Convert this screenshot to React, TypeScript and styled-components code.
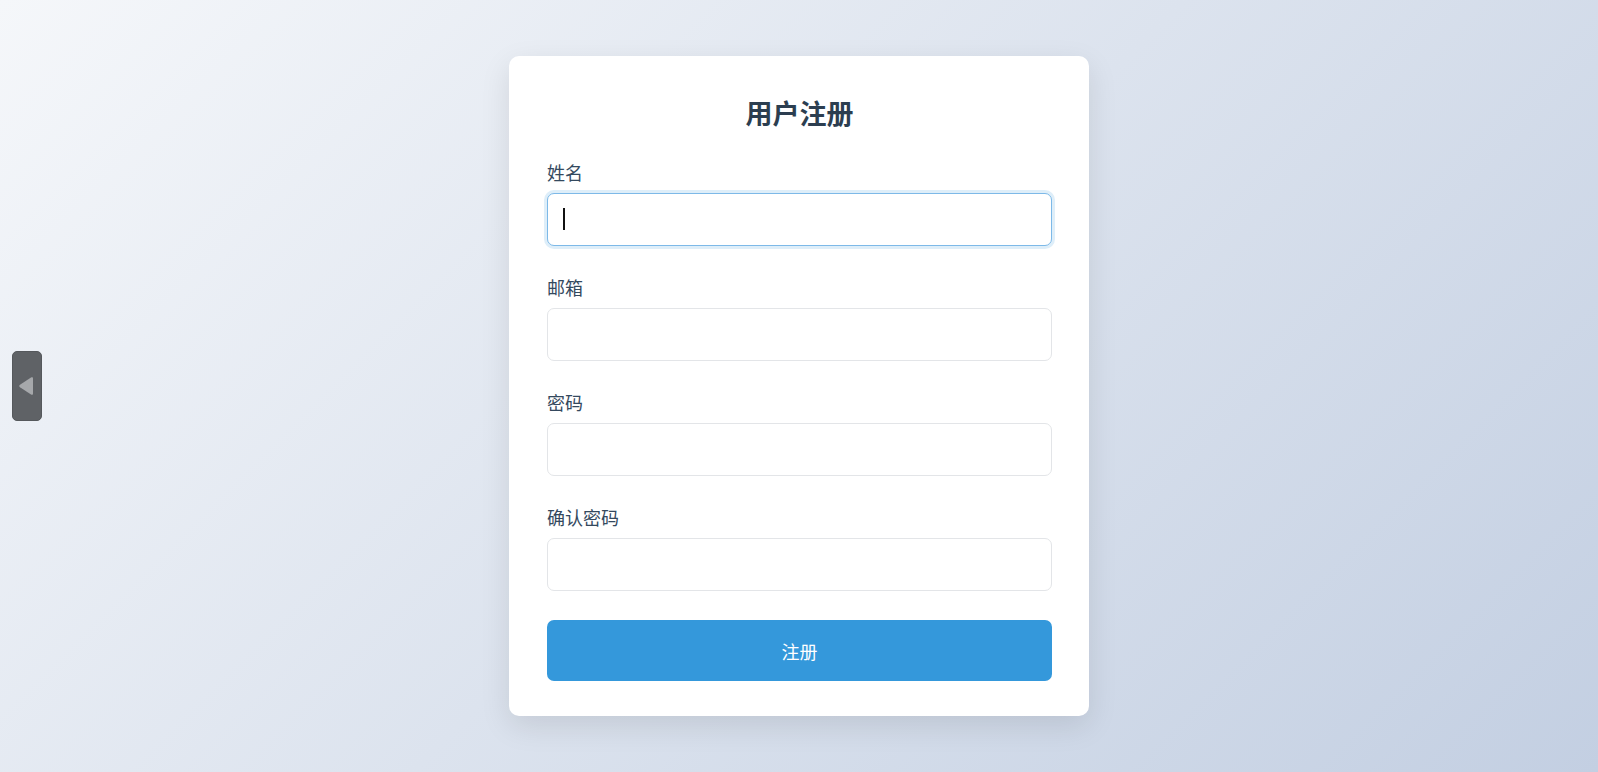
import { createGlobalStyle, styled } from 'styled-components'

const GlobalStyle = createGlobalStyle`
  html,
  body {
    margin: 0;
    padding: 0;
  }

  body {
    min-height: 100vh;
    font-family: 'Noto Sans CJK SC', 'Noto Sans', sans-serif;
    background: linear-gradient(135deg, #f5f7fa 0%, #c3cfe2 100%);
  }

  * {
    box-sizing: border-box;
  }
`

const fields = [
  { id: 'name', label: '姓名', type: 'text', focused: true },
  { id: 'email', label: '邮箱', type: 'email', focused: false },
  { id: 'password', label: '密码', type: 'password', focused: false },
  { id: 'confirm', label: '确认密码', type: 'password', focused: false },
]

export default function App() {
  return (
    <>
      <GlobalStyle />
      <Page>
        <SideTab type="button" aria-label="展开侧栏">
          <svg width="16" height="20" viewBox="0 0 16 20">
            <path
              d="M13 1.6 C14.2 0.9 15 1.4 15 2.6 L15 17.4 C15 18.6 14.2 19.1 13 18.4 L2 11.3 C1 10.6 1 9.4 2 8.7 Z"
              fill="#a6a8ab"
            />
          </svg>
        </SideTab>
        <Card>
          <Title>用户注册</Title>
          <Form onSubmit={(event) => event.preventDefault()}>
            {fields.map((field) => (
              <Group key={field.id}>
                <Label htmlFor={field.id}>{field.label}</Label>
                <InputWrap>
                  <Input id={field.id} type={field.type} $focused={field.focused} />
                  {field.focused && <Caret />}
                </InputWrap>
              </Group>
            ))}
            <SubmitButton type="submit">注册</SubmitButton>
          </Form>
        </Card>
      </Page>
    </>
  )
}

const Page = styled.div`
  position: relative;
  min-height: 100vh;
  display: flex;
  align-items: center;
  justify-content: center;
`

const SideTab = styled.button`
  position: absolute;
  left: 12px;
  top: 351px;
  width: 30px;
  height: 70px;
  padding: 0 2px 0 0;
  display: flex;
  align-items: center;
  justify-content: center;
  background: #5f6266;
  border: 1px solid #55585c;
  border-radius: 5px;
  cursor: pointer;
`

const Card = styled.div`
  width: 580px;
  padding: 40px 37px 35px 38px;
  background: #ffffff;
  border-radius: 10px;
  box-shadow: 0 10px 30px rgba(0, 0, 0, 0.1);
`

const Title = styled.h1`
  margin: 0 0 30px;
  color: #2c3e50;
  font-size: 27px;
  font-weight: 700;
  line-height: 34px;
  text-align: center;
`

const Form = styled.form`
  display: flex;
  flex-direction: column;
`

const Group = styled.div`
  display: flex;
  flex-direction: column;
  margin-bottom: 29px;
`

const Label = styled.label`
  margin-bottom: 8px;
  color: #34495e;
  font-size: 18px;
  line-height: 25px;
`

const InputWrap = styled.div`
  position: relative;
`

const Input = styled.input<{ $focused: boolean }>`
  width: 100%;
  height: 53px;
  padding: 0 16px;
  color: #2c3e50;
  font: inherit;
  font-size: 18px;
  background: #ffffff;
  border: 1px solid ${({ $focused }) => ($focused ? '#7db9e8' : '#e3e5e8')};
  border-radius: 7px;
  box-shadow: ${({ $focused }) =>
    $focused ? '0 0 0 3px rgba(52, 152, 219, 0.16)' : 'none'};
  caret-color: transparent;
  outline: none;
`

const Caret = styled.span`
  position: absolute;
  left: 16px;
  top: 15px;
  width: 2px;
  height: 22px;
  background: #111111;
`

const SubmitButton = styled.button`
  height: 61px;
  color: #ffffff;
  font: inherit;
  font-size: 18px;
  background: #3498db;
  border: none;
  border-radius: 7px;
  cursor: pointer;
`
